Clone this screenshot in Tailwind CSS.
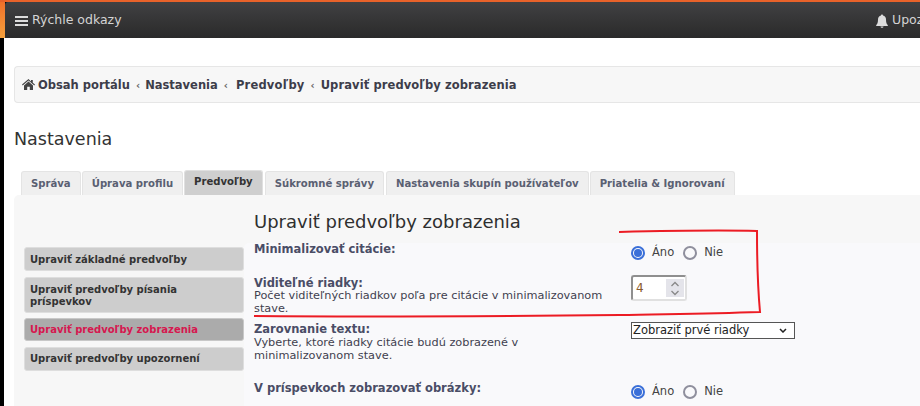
<!DOCTYPE html>
<html lang="sk">
<head>
    <meta charset="UTF-8">
    <title>Nastavenia</title>
    <script src="https://cdn.jsdelivr.net/npm/@tailwindcss/browser@4"></script>
</head>
<body class="bg-black overflow-hidden font-['DejaVu_Sans',sans-serif]">
    <div class="relative w-[920px] h-[406px] overflow-hidden">
        <!-- Top bar -->
        <div class="h-[2px] bg-[#e8622a]"></div>
        <div class="flex h-[36px]">
            <div class="w-[5px] bg-gradient-to-b from-[#f0702a] to-[#f4a03c]"></div>
            <div class="flex-1 flex items-center justify-between bg-gradient-to-b from-[#414143] to-[#2a2a2a] rounded-tl-[3px] pl-[10px] pt-[1px] text-[#d4d4d4] text-[12.500px]">
                <div class="flex items-center gap-[4px]">
                    <svg class="w-[13px] h-[12px]" viewBox="0 0 13 12" fill="#dcdcdc"><rect y="1" width="13" height="2"/><rect y="5" width="13" height="2"/><rect y="9" width="13" height="2"/></svg>
                    <span>Rýchle odkazy</span>
                </div>
                <div class="flex items-center gap-[3px] w-[45px] overflow-hidden shrink-0">
                    <svg class="w-[14px] h-[14px] shrink-0" viewBox="0 0 14 14" fill="#dcdcdc"><path d="M7 0.500c.6 0 1 .4 1 1 2 .4 3 2 3 4 0 3 .6 4.400 1.800 5.600v.9H1.200v-.9C2.400 9.900 3 8.500 3 5.500c0-2 1-3.600 3-4 0-.6.4-1 1-1zM5.500 12.500h3c0 .8-.7 1.300-1.500 1.300s-1.500-.5-1.500-1.300z"/></svg>
                    <span>Upozornenia</span>
                </div>
            </div>
        </div>

        <div class="flex">
            <div class="w-[4px] bg-black"></div>
            <main class="flex-1 bg-white h-[368px] pl-[10px]">
                <!-- Breadcrumb -->
                <div class="mt-[28px] h-[37px] flex items-center gap-[6px] pl-[7px] pt-[2px] bg-[#f7f7f7] border border-[#e6e6e6] border-r-0 rounded-l-[4px] text-[11.500px] font-bold text-[#3d3d4a]">
                    <svg class="w-[13px] h-[11px] -mt-[2px]" viewBox="0 0 13 11" fill="#444"><path d="M6.500 0 0 5.600l.7.8 5.800-5 5.800 5 .7-.8-2.200-1.900V1H9v1.500zM2 6.500V11h3.200V7.800h2.600V11H11V6.500L6.500 2.600z"/></svg>
                    <span class="-ml-[3px]">Obsah portálu</span>
                    <span class="text-[#666] text-[10px] -mr-[1px]">‹</span>
                    <span>Nastavenia</span>
                    <span class="text-[#666] text-[10px] mr-[2px]">‹</span>
                    <span class="tracking-[0.2px]">Predvoľby</span>
                    <span class="text-[#666] text-[10px]">‹</span>
                    <span class="tracking-[0.1px]">Upraviť predvoľby zobrazenia</span>
                </div>

                <h1 class="mt-[25px] text-[17.500px] leading-[22px] text-[#333]">Nastavenia</h1>

                <!-- Tabs -->
                <div class="mt-[20px] flex items-end gap-[1px] pl-[7px] h-[25px] text-[10.100px] font-bold text-[#5a6072]">
                    <div class="h-[24px] flex items-center px-[9px] bg-[#efefef] border border-b-0 border-[#e4e4e4] rounded-t-[3px]">Správa</div>
                    <div class="h-[24px] flex items-center px-[9px] bg-[#efefef] border border-b-0 border-[#e4e4e4] rounded-t-[3px]">Úprava profilu</div>
                    <div class="h-[25px] flex items-center pb-[2px] px-[9px] bg-[#cfcfcf] border border-b-0 border-[#e0e0e0] rounded-t-[3px] text-[#333]">Predvoľby</div>
                    <div class="ml-[1px] h-[24px] flex items-center px-[9px] bg-[#efefef] border border-b-0 border-[#e4e4e4] rounded-t-[3px]">Súkromné správy</div>
                    <div class="ml-[1px] h-[24px] flex items-center px-[9px] bg-[#efefef] border border-b-0 border-[#e4e4e4] rounded-t-[3px]">Nastavenia skupín používateľov</div>
                    <div class="h-[24px] flex items-center px-[9px] bg-[#efefef] border border-b-0 border-[#e4e4e4] rounded-t-[3px]">Priatelia &amp; Ignorovaní</div>
                </div>

                <!-- Panel -->
                <div class="flex h-[222px] bg-[#f7f7f7] rounded-tl-[5px] pl-[10px]">
                    <nav class="w-[220px] shrink-0 pt-[52px] flex flex-col gap-[5.500px] text-[10px] font-bold leading-[12px] text-[#333]">
                        <a class="block bg-[#cdcdcd] border border-[#dedede] rounded-[3px] px-[5px] pt-[6px] pb-[4px] h-[24px]">Upraviť základné predvoľby</a>
                        <a class="block bg-[#cdcdcd] border border-[#dedede] rounded-[3px] px-[5px] pt-[6px] pb-[4px] h-[36px]">Upraviť predvoľby písania príspevkov</a>
                        <a class="block bg-[#ababab] border border-[#c8c8c8] rounded-[3px] px-[5px] pt-[5px] pb-[4px] h-[23px] text-[#d6174f]">Upraviť predvoľby zobrazenia</a>
                        <a class="block bg-[#cdcdcd] border border-[#dedede] rounded-[3px] px-[5px] pt-[5px] pb-[4px] h-[24px]">Upraviť predvoľby upozornení</a>
                    </nav>

                    <section class="flex-1 pt-[16px] text-[11.300px] leading-[13px] text-[#3f3f4f]">
                        <h2 class="pl-[10px] text-[18px] leading-[22px] text-[#2f2f2f] mb-[10px]">Upraviť predvoľby zobrazenia</h2>
                        <div class="pl-[10px] bg-[#f9f9fb] rounded-tl-[5px] h-[180px]">
                            <div class="flex h-[34px]">
                                <div class="w-[377px] font-bold text-[11.500px] text-[#4a4d66]">Minimalizovať citácie:</div>
                                <div class="flex items-center gap-[9px] h-[13px] mt-[3px] text-[#444] text-[11.500px]">
                                    <span class="flex items-center gap-[7px]"><span class="w-[14px] h-[14px] rounded-full border-2 border-[#3a6fd8] flex items-center justify-center"><span class="w-[8px] h-[8px] rounded-full bg-[#3a6fd8]"></span></span>Áno</span>
                                    <span class="flex items-center gap-[7px]"><span class="w-[14px] h-[14px] rounded-full border-2 border-[#8f8f9d]"></span>Nie</span>
                                </div>
                            </div>
                            <div class="flex h-[47px]">
                                <div class="w-[377px] pr-[17px]"><b class="block h-[12px] text-[11.500px] text-[#4a4d66]">Viditeľné riadky:</b>Počet viditeľných riadkov poľa pre citácie v minimalizovanom stave.</div>
                                <div class="w-[56px] h-[26px] -mt-[2px] border-2 border-[#8f8f8f] border-r-[#e0e0e0] border-b-[#e0e0e0] rounded-[3px] bg-white flex items-center justify-between pl-[3px] pr-[1px] text-[12px] text-[#8a5a2a]">
                                    <span>4</span>
                                    <span class="w-[18px] h-[18px] bg-[#e4e4ea] flex items-center justify-center"><svg class="w-[10px] h-[15px]" viewBox="0 0 10 15" fill="none" stroke="#888" stroke-width="1.300"><path d="M1.500 5 5 1.500 8.500 5M1.500 10 5 13.500 8.500 10"/></svg></span>
                                </div>
                            </div>
                            <div class="flex h-[58px]">
                                <div class="w-[377px] -mt-[1px]"><b class="block h-[13px] text-[11.500px] text-[#4a4d66]">Zarovnanie textu:</b>Vyberte, ktoré riadky citácie budú zobrazené v<br>minimalizovanom stave.</div>
                                <div class="w-[164px] h-[17px] -mt-[2px] border border-[#555] bg-white flex items-center justify-between pl-[1px] pr-[7px] text-[11.500px] text-[#222]">
                                    <span>Zobraziť prvé riadky</span>
                                    <svg class="w-[8px] h-[5px]" viewBox="0 0 8 5" fill="none" stroke="#222" stroke-width="1.500"><path d="M1 1l3 3 3-3"/></svg>
                                </div>
                            </div>
                            <div class="flex">
                                <div class="w-[377px] font-bold text-[11.500px] text-[#4a4d66]">V príspevkoch zobrazovať obrázky:</div>
                                <div class="flex items-center gap-[9px] h-[13px] mt-[3px] text-[#444] text-[11.500px]">
                                    <span class="flex items-center gap-[7px]"><span class="w-[14px] h-[14px] rounded-full border-2 border-[#3a6fd8] flex items-center justify-center"><span class="w-[8px] h-[8px] rounded-full bg-[#3a6fd8]"></span></span>Áno</span>
                                    <span class="flex items-center gap-[7px]"><span class="w-[14px] h-[14px] rounded-full border-2 border-[#8f8f9d]"></span>Nie</span>
                                </div>
                            </div>
                        </div>
                    </section>
                </div>
            </main>
        </div>

        <!-- Red hand-drawn annotation -->
        <svg class="absolute left-0 top-0 pointer-events-none" width="920" height="406" fill="none" stroke="#ec1c24" stroke-width="2">
            <path d="M619 232 C660 231 720 230 757 231 C757 260 758 290 760 312 C700 314 660 314 620 315 C520 316 380 317 254 316"/>
        </svg>
    </div>
</body>
</html>
